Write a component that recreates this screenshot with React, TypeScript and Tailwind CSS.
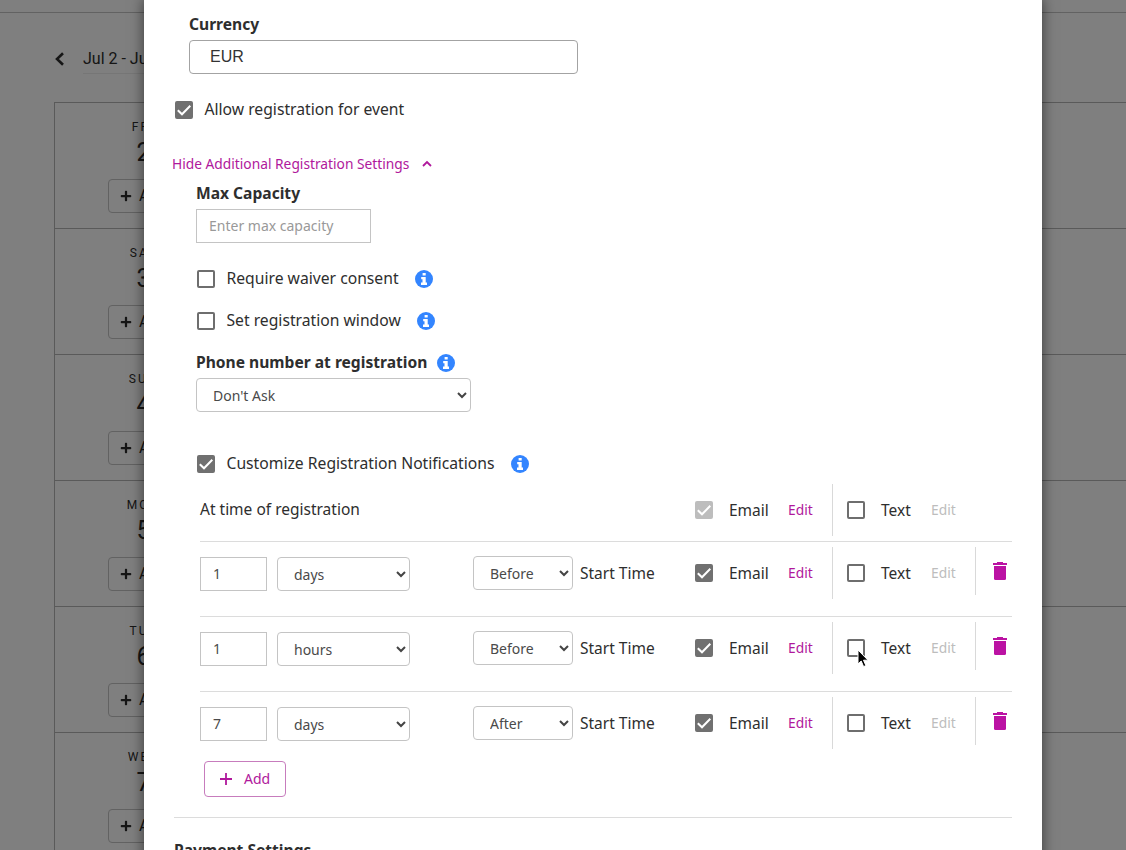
import { useState, type ReactNode } from 'react'
import { FaPlus } from 'react-icons/fa'

const days = [
  { name: 'FRI', date: 2 },
  { name: 'SAT', date: 3 },
  { name: 'SUN', date: 4 },
  { name: 'MON', date: 5 },
  { name: 'TUE', date: 6 },
  { name: 'WED', date: 7 },
]

interface Notification {
  amount: string
  unit: string
  when: string
}

const notifications: Notification[] = [
  { amount: '1', unit: 'days', when: 'Before' },
  { amount: '1', unit: 'hours', when: 'Before' },
  { amount: '7', unit: 'days', when: 'After' },
]

function Checkbox({ initial = false, disabled = false }: { initial?: boolean; disabled?: boolean }) {
  const [checked, setChecked] = useState(initial)
  const look = disabled
    ? 'bg-[#bdbdbd] border-[#bdbdbd]'
    : checked
      ? 'bg-[#707070] border-[#707070]'
      : 'bg-white border-[#6e6e6e]'

  return (
    <button
      type="button"
      role="checkbox"
      aria-checked={checked}
      disabled={disabled}
      onClick={() => setChecked(!checked)}
      className={`flex h-[18px] w-[18px] shrink-0 items-center justify-center rounded-[2px] border-2 ${look}`}
    >
      {checked && (
        <svg viewBox="0 0 18 18" className="h-[18px] w-[18px] shrink-0" fill="none" stroke="white" strokeWidth="2">
          <path d="M2.8 9.2 7 13.3 15.3 4.8" />
        </svg>
      )}
    </button>
  )
}

function Info() {
  return (
    <svg viewBox="0 0 18 18" className="h-[18px] w-[18px] shrink-0">
      <circle cx="9" cy="9" r="9" fill="#3385ff" />
      <path d="M7.6 3h3.100v2.600H7.600zM6.200 7h4.500v5.600H12V15H6v-2.400h1.500V9.200H6.200z" fill="#fff" />
    </svg>
  )
}

function Select({ value, options, className }: { value: string; options: string[]; className: string }) {
  return (
    <div className={`relative h-[34px] shrink-0 ${className}`}>
      <select
        defaultValue={value}
        className="h-full w-full appearance-none rounded-[4px] border border-[#c4c4c4] bg-white pl-4 pt-px text-sm text-[#4a4a4a]"
      >
        {options.map((o) => (
          <option key={o}>{o}</option>
        ))}
      </select>
      <svg
        viewBox="0 0 10 7"
        className="pointer-events-none absolute right-1 top-[14px] h-[7px] w-[10px]"
        fill="none"
        stroke="#444"
        strokeWidth="2"
      >
        <path d="M1 1 5 5 9 1" />
      </svg>
    </div>
  )
}

function Trash() {
  return (
    <svg viewBox="0 0 14 18" className="h-[18px] w-[14px]" fill="#bb12a3">
      <path d="M0 1h4V0h6v1h4v2H0z" />
      <path d="M1 4h12v12.500a1.500 1.500 0 0 1-1.500 1.500h-9A1.500 1.500 0 0 1 1 16.500z" />
    </svg>
  )
}

function Cursor() {
  return (
    <svg viewBox="0 0 12 19" className="pointer-events-none absolute left-[10px] top-[10px] z-10 h-[19px] w-[12px]">
      <path d="M1 1v14l3.2-3 2.4 5.6 2.3-1-2.4-5.4H11z" fill="#000" stroke="#fff" strokeWidth="1" />
    </svg>
  )
}

function Channels({ locked = false, hovered = false }: { locked?: boolean; hovered?: boolean }) {
  return (
    <>
      <div className="flex h-[52px] w-[138px] items-center border-r border-[#d9d9d9]">
        <Checkbox initial disabled={locked} />
        <span className="ml-4 w-[59px] pt-px">Email</span>
        <button className="text-[13.8px] text-[#b0189c]">Edit</button>
      </div>
      <div className="flex h-[52px] w-[142px] items-center pl-[14px]">
        <div className="relative">
          <Checkbox />
          {hovered && <Cursor />}
        </div>
        <span className="ml-4 w-[50px] pt-px">Text</span>
        <span className="text-[13.8px] text-[#bdbdbd]">Edit</span>
      </div>
    </>
  )
}

function NotificationRow({ item, last, hovered }: { item: Notification; last: boolean; hovered: boolean }) {
  return (
    <div className={`flex pt-[5px] ${last ? '' : 'border-b border-[#dcdcdc] pb-[17px]'}`}>
      <div className="flex w-[495px] pt-[9px]">
        <input
          defaultValue={item.amount}
          className="mt-px h-[34px] w-[67px] border border-[#c4c4c4] pb-0.5 pl-3 text-sm text-[#4a4a4a]"
        />
        <Select value={item.unit} options={['hours', 'days']} className="ml-[10px] mt-px w-[133px]" />
        <Select value={item.when} options={['Before', 'After']} className="ml-[63px] w-[100px]" />
        <span className="ml-[7px] leading-[34px]">Start Time</span>
      </div>
      <Channels hovered={hovered} />
      <div className="flex h-[48px] items-center border-l border-[#d9d9d9] pl-[17px]">
        <Trash />
      </div>
    </div>
  )
}

function Option({ children, className, checked }: { children: ReactNode; className: string; checked?: boolean }) {
  return (
    <div className={`flex h-5 items-center ${className}`}>
      <Checkbox initial={checked} />
      <span className="ml-[11.5px] mr-4 whitespace-nowrap">{children}</span>
      <Info />
    </div>
  )
}

function Calendar() {
  return (
    <div className="h-full w-full bg-white font-[Roboto,sans-serif] text-[#2c2c2c]">
      <div className="h-[13px] border-b border-[#c4c4c4]" />
      <div className="flex h-[89px] items-center pl-[55px]">
        <svg viewBox="0 0 9 14" className="mt-[3px] h-[14px] w-[9px]" fill="none" stroke="#2c2c2c" strokeWidth="2.6">
          <path d="M8 1.2 2 7l6 5.800" />
        </svg>
        <div className="ml-[19px] mt-[2px] flex h-[30px] w-[140px] items-center border-b border-[#ececec] pt-0.5 text-base">
          Jul 2 - Jul 8
        </div>
      </div>
      <div className="ml-[54px] border-l border-t border-[#b4b4b4]">
        {days.map((d) => (
          <div key={d.name} className="flex h-[126px] border-b border-[#b4b4b4]">
            <div className="flex w-[177px] flex-col items-center pt-4">
              <span className="text-xs leading-4 tracking-[2px]">{d.name}</span>
              <span className="mt-[3px] text-[25px] leading-[30px]">{d.date}</span>
              <button className="mt-[11px] flex h-[34px] w-[71px] items-center rounded-[4px] border border-[#c4c4c4] pl-[11px] text-base">
                <FaPlus className="mr-[7px] h-3 w-3 shrink-0" />
                Add
              </button>
            </div>
          </div>
        ))}
      </div>
    </div>
  )
}

export default function App() {
  return (
    <div className="relative h-[850px] w-[1126px] overflow-hidden">
      <Calendar />
      <div className="absolute inset-0 flex bg-black/50 pl-[144px]">
        <div className="h-[900px] w-[898px] bg-white font-['Noto_Sans',sans-serif] text-[15.7px] text-[#2e2e2e] shadow-[0_0_12px_1px_rgba(0,0,0,0.5)]">
          <div className="ml-[45px] pt-3">
            <label className="block text-[15.6px] font-bold leading-6">Currency</label>
            <input
              defaultValue="EUR"
              className="mt-1 block h-[34px] w-[389px] rounded-[4px] border border-[#a3a3a3] pl-5 font-['Liberation_Sans',sans-serif] text-base text-[#333]"
            />
          </div>

          <div className="ml-[31px] mt-6 flex h-6 items-center">
            <Checkbox initial />
            <span className="mb-px ml-[11.5px]">Allow registration for event</span>
          </div>

          <button className="ml-7 mt-8 flex h-5 items-center text-[13.78px] text-[#b0189c]">
            Hide Additional Registration Settings
            <svg viewBox="0 0 10 7" className="mb-0.5 ml-[13px] h-[7px] w-[10px]" fill="none" stroke="#b0189c" strokeWidth="1.8">
              <path d="M1 6 5 2 9 6" />
            </svg>
          </button>

          <div className="ml-[52px] mt-[9px]">
            <label className="block text-[15.6px] font-bold leading-5">Max Capacity</label>
            <input
              placeholder="Enter max capacity"
              className="mt-1.5 block h-[34px] w-[175px] border border-[#c4c4c4] pb-0.5 pl-3 text-sm placeholder:text-[#999]"
            />
            <Option className="mt-[26px] pl-px">Require waiver consent</Option>
            <Option className="mt-[22px] pl-px">Set registration window</Option>
            <div className="mt-[22px] flex h-5 items-center text-[15.6px] font-bold">
              <span className="mr-[10px]">Phone number at registration</span>
              <Info />
            </div>
            <Select value="Don't Ask" options={["Don't Ask", 'Optional', 'Required']} className="mt-[5px] w-[275px]" />
            <Option className="mt-[42px] pl-px" checked>
              Customize Registration Notifications
            </Option>
          </div>

          <div className="ml-[56px] w-[812px] text-[15.5px]">
            <div className="flex border-b border-[#dcdcdc] pb-[5px] pt-[10px]">
              <span className="w-[495px] leading-[50px]">At time of registration</span>
              <Channels locked />
            </div>
            {notifications.map((item, i) => (
              <NotificationRow key={i} item={item} hovered={i === 1} last={i === notifications.length - 1} />
            ))}
            <button className="ml-1 mt-3 flex h-9 w-[82px] items-center rounded-[4px] border border-[#c77cbd] pl-[15px] text-sm text-[#b0189c]">
              <svg viewBox="0 0 12 12" className="mr-3 h-3 w-3" fill="none" stroke="#b0189c" strokeWidth="1.8">
                <path d="M6 0v12M0 6h12" />
              </svg>
              Add
            </button>
          </div>

          <div className="ml-[30px] mt-5 w-[838px] border-t border-[#dcdcdc] pt-5">
            <h3 className="text-[15.6px] font-bold leading-6">Payment Settings</h3>
          </div>
        </div>
      </div>
    </div>
  )
}
